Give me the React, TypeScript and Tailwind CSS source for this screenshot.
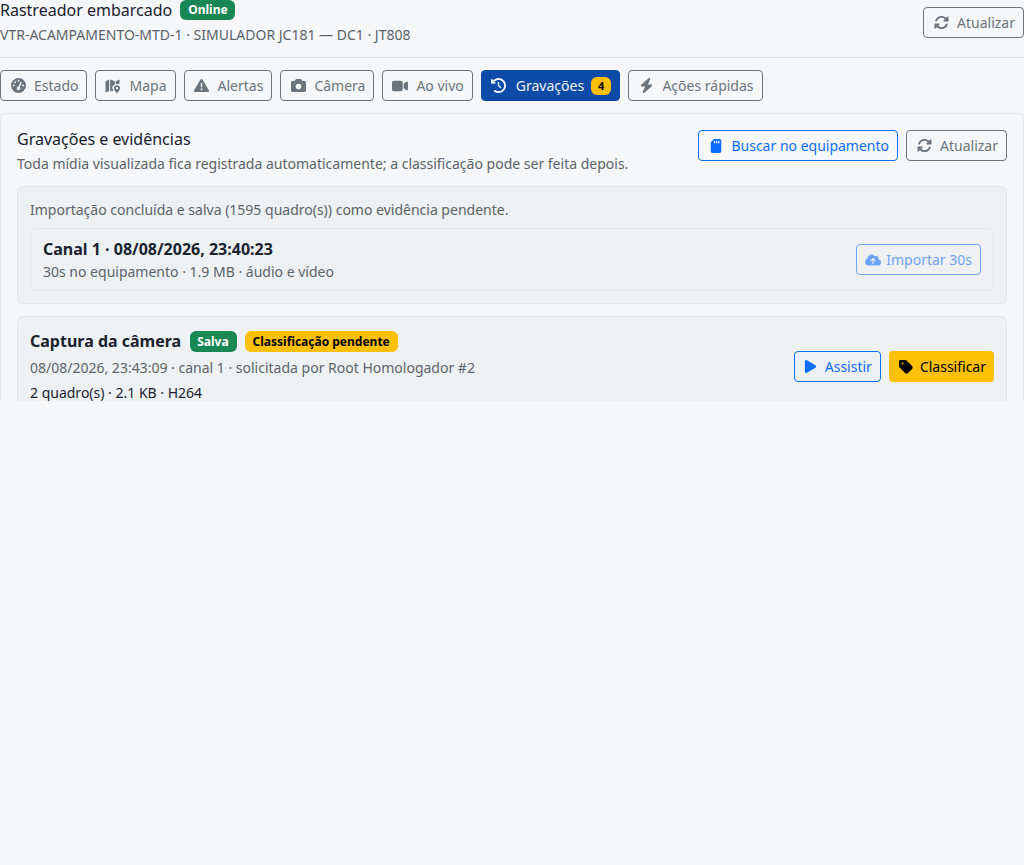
import React from 'react';
import {
  FaBolt,
  FaCamera,
  FaClockRotateLeft,
  FaCloudArrowUp,
  FaGaugeHigh,
  FaPlay,
  FaRotate,
  FaSdCard,
  FaTag,
  FaTriangleExclamation,
  FaVideo,
} from 'react-icons/fa6';

// folded map with a pin at the lower right
const MapPinIcon = ({ size = 16 }: { size?: number }) => (
  <svg width={size} height={size} viewBox="0 0 16 16" fill="currentColor">
    <path d="M0.5 3.2 4.2 1.6V13L0.5 14.6Z" />
    <path d="M5.2 1.6 9.8 3.2V6.6C8.4 7 7.4 8.3 7.4 9.8C7.4 10.8 7.9 12 8.6 13.2L5.2 13Z" />
    <path d="M10.8 3.2 14.5 1.6V5.8C13.6 5.6 12 5.8 10.8 6.3Z" />
    <path
      fillRule="evenodd"
      d="M12 7.2C10.2 7.2 8.9 8.4 8.9 10C8.9 11.5 10.6 13.8 12 15.4C13.4 13.8 15.1 11.5 15.1 10C15.1 8.4 13.8 7.2 12 7.2ZM12 8.9A1.2 1.2 0 1 1 12 11.3A1.2 1.2 0 1 1 12 8.9Z"
    />
  </svg>
);

const tabs = [
  { label: 'Estado', icon: FaGaugeHigh, size: 15 },
  { label: 'Mapa', icon: MapPinIcon, size: 16 },
  { label: 'Alertas', icon: FaTriangleExclamation, size: 15 },
  { label: 'Câmera', icon: FaCamera, size: 15 },
  { label: 'Ao vivo', icon: FaVideo, size: 16 },
  { label: 'Gravações', icon: FaClockRotateLeft, size: 15, active: true, count: 4 },
  { label: 'Ações rápidas', icon: FaBolt, size: 15 },
];

const RefreshButton = () => (
  <button className="flex h-[31px] items-center rounded border border-[#6c757d] pr-2 pl-[9px] text-sm text-[#6c757d]">
    <span className="mr-2 flex w-4 justify-center">
      <FaRotate size={15} />
    </span>
    Atualizar
  </button>
);

export default function App() {
  return (
    <div className="min-h-screen bg-[#f5f7f9] font-['Noto_Sans',sans-serif] text-sm text-[#1a2230]">
      <div className="h-[401px] overflow-hidden">
        <header className="flex h-[58px] items-start justify-between border-b border-[#dee2e6]">
          <div>
            <div className="flex h-[20px] items-center gap-2">
              <h1 className="text-base leading-6">Rastreador embarcado</h1>
              <span className="rounded-md bg-[#198754] pr-[7px] pl-2 py-[3px] text-xs leading-[14px] font-bold text-white">Online</span>
            </div>
            <p className="mt-[5px] leading-5 text-[#5c636a]">VTR-ACAMPAMENTO-MTD-1 · SIMULADOR JC181 — DC1 · JT808</p>
          </div>
          <div className="mt-[7px]">
            <RefreshButton />
          </div>
        </header>

        <nav className="mt-3 flex gap-2">
          {tabs.map(({ label, icon: Icon, size, active, count }) => (
            <button
              key={label}
              className={
                active
                  ? 'flex h-[31px] items-center rounded border border-[#0d4ba8] bg-[#0d4ba8] pr-2 pl-[9px] text-sm text-[#eef3fb]'
                  : 'flex h-[31px] items-center rounded border border-[#6c757d] pr-2 pl-[9px] text-sm text-[#6c757d]'
              }
            >
              <span className={active ? 'mr-[9px] flex w-4 justify-center' : 'mr-2 flex w-4 justify-center'}>
                <Icon size={size} />
              </span>
              {label}
              {count && (
                <span className="ml-[7px] rounded-md bg-[#ffc107] px-[7px] text-[11px] leading-[18px] font-bold text-black">{count}</span>
              )}
            </button>
          ))}
        </nav>

        <section className="mt-3 rounded-md border border-[#e3e6ea] bg-[#f5f7f9] p-4">
          <div className="flex items-start justify-between">
            <div className="-mt-[3px]">
              <h2 className="text-base leading-6">Gravações e evidências</h2>
              <p className="mt-[3px] leading-5 text-[#5c636a]">Toda mídia visualizada fica registrada automaticamente; a classificação pode ser feita depois.</p>
            </div>
            <div className="flex gap-2">
              <button className="flex h-[31px] items-center rounded border border-[#0d6efd] pr-2 pl-[9px] text-sm text-[#0d6efd]">
                <span className="mr-[7px] flex w-4 justify-center">
                  <FaSdCard size={14} />
                </span>
                Buscar no equipamento
              </button>
              <RefreshButton />
            </div>
          </div>

          <div className="mt-[12px] rounded-md border border-[#e3e6ea] bg-[#eef1f4] p-3">
            <p className="mt-[1px] leading-5 text-[#5c636a]">Importação concluída e salva (1595 quadro(s)) como evidência pendente.</p>
            <div className="mt-2 flex h-[63px] items-center justify-between rounded-md border border-[#e3e6ea] px-3">
              <div>
                <div className="text-base leading-6 font-bold">Canal 1 · 08/08/2026, 23:40:23</div>
                <div className="mt-[1px] leading-5 text-[#5c636a]">30s no equipamento · 1.9 MB · áudio e vídeo</div>
              </div>
              <button className="flex h-[31px] items-center gap-[5px] rounded border border-[#6ea3f5] px-2 text-sm text-[#6ea3f5]">
                <FaCloudArrowUp size={16} />
                Importar 30s
              </button>
            </div>
          </div>

          <div className="mt-3 rounded-md border border-[#e3e6ea] bg-[#eef1f4] p-3">
            <div className="flex items-center justify-between">
              <div>
                <div className="flex items-center gap-2">
                  <span className="text-base leading-6 font-bold">Captura da câmera</span>
                  <span className="ml-[1px] rounded-md bg-[#198754] pr-2 pl-[7px] py-[3px] text-xs leading-[15px] font-bold text-white">Salva</span>
                  <span className="rounded-md bg-[#ffc107] px-2 py-[3px] text-xs leading-[15px] font-bold text-black">Classificação pendente</span>
                </div>
                <p className="mt-[5px] leading-5 text-[#5c636a]">08/08/2026, 23:43:09 · canal 1 · solicitada por Root Homologador #2</p>
                <p className="mt-[5px] leading-5">2 quadro(s) · 2.1 KB · H264</p>
              </div>
              <div className="flex gap-2">
                <button className="flex h-[31px] items-center rounded border border-[#0d6efd] px-2 pt-px text-sm text-[#0d6efd]">
                  <span className="mr-1.5 flex w-4 justify-center">
                    <FaPlay size={15} />
                  </span>
                  Assistir
                </button>
                <button className="flex h-[31px] items-center rounded bg-[#ffc107] pt-px pr-2 pl-[9px] text-sm text-black">
                  <span className="mr-1.5 flex w-4 justify-center">
                    <FaTag size={16} />
                  </span>
                  Classificar
                </button>
              </div>
            </div>
          </div>
        </section>
      </div>
    </div>
  );
}
